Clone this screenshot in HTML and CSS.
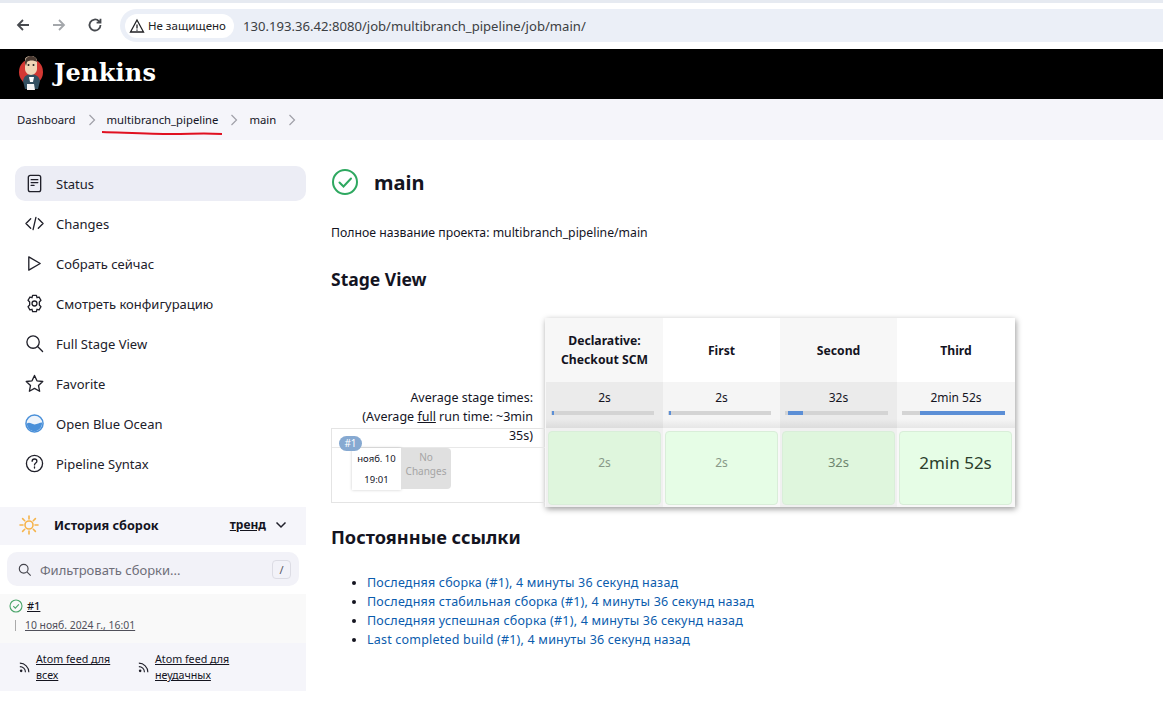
FILE: index.html
```html
<!DOCTYPE html>
<html lang="ru">
<head>
<meta charset="utf-8">
<title>main - Jenkins</title>
<link rel="stylesheet" href="styles.css">
</head>
<body>
<div class="chrome">
  <div class="nav">
    <svg class="nav-icon" viewBox="0 0 16 16"><path d="M14 8H3M8 3 3 8l5 5"/></svg>
    <svg class="nav-icon dim" viewBox="0 0 16 16"><path d="M2 8h11M8 3l5 5-5 5"/></svg>
    <svg class="nav-icon" viewBox="0 0 16 16"><path d="M13.5 8a5.5 5.5 0 1 1-1.6-3.9L13.5 5.7M13.5 1.8v3.9H9.6"/></svg>
  </div>
  <div class="omnibox">
    <div class="chip">
      <svg class="warn" viewBox="0 0 16 16"><path d="M8 2 1.5 14h13zM8 6.5v4M8 11.5v1.2"/></svg>
      <span>Не защищено</span>
    </div>
    <span class="url">130.193.36.42:8080/job/multibranch_pipeline/job/main/</span>
  </div>
</div>
<header class="topbar">
  <svg class="logo" viewBox="0 0 28 36">
    <ellipse cx="14" cy="17" rx="12" ry="13" fill="#d33833"/>
    <path d="M6 26c1-5 4-7 8-7s8 2 9 7l-2 8H8z" fill="#335061"/>
    <path d="M12 22h5l-1 5h-3z" fill="#fff"/>
    <path d="M8 5c0-3 3-4 6-4s6 2 6 5v8c0 3-3 6-6 6s-6-3-6-6z" fill="#f0d6b7"/>
    <path d="M8 8c0-5 3-7 6-7s6 2 6 6c-3-2-8-2-10 0l-1 4z" fill="#4a3a32"/>
    <path d="M10 29h7l1 6h-8z" fill="#f5f5f5"/>
    <circle cx="11.500" cy="10" r="1" fill="#222"/>
    <circle cx="16.500" cy="10" r="1" fill="#222"/>
  </svg>
  <span class="brand">Jenkins</span>
</header>
<nav class="crumbs">
  <a>Dashboard</a>
  <svg class="chev" viewBox="0 0 8 12"><path d="m1.500 1 5 5-5 5"/></svg>
  <a>multibranch_pipeline</a>
  <svg class="chev" viewBox="0 0 8 12"><path d="m1.500 1 5 5-5 5"/></svg>
  <a>main</a>
  <svg class="chev" viewBox="0 0 8 12"><path d="m1.500 1 5 5-5 5"/></svg>
  <svg class="scribble" viewBox="0 0 122 6"><path d="M1 2c30 1 50 2 70 2s30-1 50 0"/></svg>
</nav>
<div class="layout">
  <aside class="side">
    <ul class="menu">
      <li class="item active">
        <svg class="ico" viewBox="0 0 20 20"><rect x="3.500" y="1.500" width="13" height="17" rx="2"/><path d="M6.500 6h7M6.500 9h7M6.500 12h3"/></svg>
        <span>Status</span>
      </li>
      <li class="item">
        <svg class="ico" viewBox="0 0 20 20"><path d="M6 5 1 10l5 5M14 5l5 5-5 5M11.500 3.500l-3 13"/></svg>
        <span>Changes</span>
      </li>
      <li class="item">
        <svg class="ico" viewBox="0 0 20 20"><path d="M4 3v14l12-7z"/></svg>
        <span>Собрать сейчас</span>
      </li>
      <li class="item">
        <svg class="ico" viewBox="0 0 20 20"><path d="M8 1.500h4l.6 2.400 2.200-.7 2 3.400-1.700 1.800v3.200l1.700 1.800-2 3.400-2.200-.7-.6 2.400H8l-.6-2.400-2.200.7-2-3.400 1.700-1.800V8.400L3.200 6.600l2-3.400 2.200.7z"/><circle cx="10" cy="10" r="2.600"/></svg>
        <span>Смотреть конфигурацию</span>
      </li>
      <li class="item">
        <svg class="ico" viewBox="0 0 20 20"><circle cx="8.500" cy="8.500" r="6.500"/><path d="m13.500 13.500 5 5"/></svg>
        <span>Full Stage View</span>
      </li>
      <li class="item">
        <svg class="ico" viewBox="0 0 20 20"><path d="m10 1.500 2.600 5.700 6.100.7-4.500 4.200 1.200 6.100L10 15.200l-5.400 3 1.200-6.100-4.500-4.200 6.100-.7z"/></svg>
        <span>Favorite</span>
      </li>
      <li class="item">
        <svg class="ico ocean" viewBox="0 0 20 20"><circle class="ocean-ring" cx="10" cy="10" r="9"/><path class="ocean-wave" d="M2 10c3-2 5 1 8 1s5-2 8-2c0 5-3 9-8 9s-8-4-8-8z"/></svg>
        <span>Open Blue Ocean</span>
      </li>
      <li class="item">
        <svg class="ico" viewBox="0 0 20 20"><circle cx="10" cy="10" r="8.500"/><path d="M7.500 7.700c0-1.500 1.100-2.400 2.500-2.400s2.500.9 2.500 2.200c0 2-2.500 2-2.500 4M10 13.500v1.300"/></svg>
        <span>Pipeline Syntax</span>
      </li>
    </ul>
    <section class="history">
      <div class="history-head">
        <svg class="sun" viewBox="0 0 20 20"><circle cx="10" cy="10" r="4"/><path d="M10 1v3M10 16v3M1 10h3M16 10h3M3.600 3.600l2.100 2.100M14.300 14.300l2.100 2.100M3.600 16.400l2.100-2.100M14.300 5.700l2.100-2.100"/></svg>
        <strong class="history-title">История сборок</strong>
        <span class="trend">тренд</span>
        <svg class="trend-chev" viewBox="0 0 12 8"><path d="m1.500 1.500 4.500 4.500 4.500-4.500"/></svg>
      </div>
      <div class="filter">
        <svg class="filter-ico" viewBox="0 0 16 16"><circle cx="6.500" cy="6.500" r="5"/><path d="m10.500 10.500 4 4"/></svg>
        <span class="filter-text">Фильтровать сборки...</span>
        <kbd class="slash">/</kbd>
      </div>
      <div class="build">
        <div class="build-top">
          <svg class="build-ok" viewBox="0 0 14 14"><circle cx="7" cy="7" r="6"/><path d="m4.300 7.200 2 2 3.600-3.800"/></svg>
          <a class="build-num">#1</a>
        </div>
        <div class="build-date"><i class="tick"></i><a>10 нояб. 2024 г., 16:01</a></div>
      </div>
      <div class="feeds">
        <div class="feed">
          <svg class="rss" viewBox="0 0 14 14"><circle cx="2.500" cy="11.500" r="1.500"/><path d="M1 6.500a6.500 6.500 0 0 1 6.500 6.500M1 2.500A10.500 10.500 0 0 1 11.500 13"/></svg>
          <a>Atom feed для<br>всех</a>
        </div>
        <div class="feed">
          <svg class="rss" viewBox="0 0 14 14"><circle cx="2.500" cy="11.500" r="1.500"/><path d="M1 6.500a6.500 6.500 0 0 1 6.500 6.500M1 2.500A10.500 10.500 0 0 1 11.500 13"/></svg>
          <a>Atom feed для<br>неудачных</a>
        </div>
      </div>
    </section>
  </aside>
  <main class="content">
    <div class="title-row">
      <svg class="title-ok" viewBox="0 0 28 28"><circle cx="14" cy="14" r="12"/><path d="m8.500 14.500 4 4 7.500-8"/></svg>
      <h1>main</h1>
    </div>
    <p class="fullname">Полное название проекта: multibranch_pipeline/main</p>
    <h2 class="stage-title">Stage View</h2>
    <div class="stage">
      <div class="stage-left">
        <div class="avg">Average stage times:<br>(Average <u>full</u> run time: ~3min 35s)</div>
        <div class="runs">
          <span class="badge">#1</span>
          <div class="run-row">
            <div class="date"><span>нояб. 10</span><span>19:01</span></div>
            <div class="nochg">No Changes</div>
          </div>
        </div>
      </div>
      <div class="grid">
        <div class="th alt">Declarative: Checkout SCM</div>
        <div class="th">First</div>
        <div class="th alt">Second</div>
        <div class="th">Third</div>
        <div class="avgc alt"><span>2s</span><div class="bar"><i class="fill" style="margin-left:1px;width:2px"></i></div></div>
        <div class="avgc"><span>2s</span><div class="bar"><i class="fill" style="margin-left:1px;width:2px"></i></div></div>
        <div class="avgc alt"><span>32s</span><div class="bar"><i class="fill" style="margin-left:3px;width:15px"></i></div></div>
        <div class="avgc"><span>2min 52s</span><div class="bar"><i class="fill" style="margin-left:18px;width:85px"></i></div></div>
        <div class="cellw alt"><div class="cell dark small">2s</div></div>
        <div class="cellw"><div class="cell small">2s</div></div>
        <div class="cellw alt"><div class="cell dark mid">32s</div></div>
        <div class="cellw"><div class="cell big">2min 52s</div></div>
      </div>
    </div>
    <h2 class="links-title">Постоянные ссылки</h2>
    <ul class="links">
      <li><a>Последняя сборка (#1), 4 минуты 36 секунд назад</a></li>
      <li><a>Последняя стабильная сборка (#1), 4 минуты 36 секунд назад</a></li>
      <li><a>Последняя успешная сборка (#1), 4 минуты 36 секунд назад</a></li>
      <li><a>Last completed build (#1), 4 минуты 36 секунд назад</a></li>
    </ul>
  </main>
</div>
</body>
</html>
```
FILE: styles.css
```css
* { box-sizing: border-box; }
html, body { margin: 0; padding: 0; }
body {
  width: 1163px;
  height: 724px;
  overflow: hidden;
  background: #fff;
  color: #14141f;
  font-family: "Noto Sans", "Open Sans", sans-serif;
  font-size: 13px;
}
ul { list-style: none; margin: 0; padding: 0; }
h1, h2, p { margin: 0; }

.chrome {
  height: 49px;
  display: flex;
  align-items: flex-start;
  padding: 9px 0 0 15px;
  background: #fff;
  border-top: 3px solid #e6eaf1;
}
.nav { display: flex; gap: 20px; padding-top: 5px; width: 105px; }
.nav-icon { width: 16px; height: 16px; fill: none; stroke: #474a4f; stroke-width: 1.8; }
.nav-icon.dim { stroke: #a4a7ab; }
.omnibox {
  flex: 1;
  height: 33px;
  margin-top: -3px;
  display: flex;
  align-items: center;
  padding-left: 5px;
  background: #ebeff7;
  border-radius: 17px 0 0 17px;
}
.chip {
  display: flex;
  align-items: center;
  gap: 3px;
  width: 109px;
  height: 24px;
  padding-left: 4px;
  background: #fff;
  border-radius: 12px;
  font-size: 11.500px;
  color: #202124;
}
.warn { width: 16px; height: 16px; fill: none; stroke: #202124; stroke-width: 1.3; }
.url { margin-left: 9px; font-size: 13.100px; color: #3c4043; }

.topbar {
  height: 50px;
  display: flex;
  align-items: center;
  gap: 9px;
  padding: 0 0 3px 17px;
  background: #000;
}
.logo { width: 28px; height: 36px; }
.brand {
  font-family: "DejaVu Serif", "Liberation Serif", serif;
  font-weight: 700;
  font-size: 24px;
  letter-spacing: .2px;
  color: #fff;
}

.crumbs {
  position: relative;
  height: 41px;
  display: flex;
  align-items: center;
  padding-left: 17px;
  background: #f5f5fa;
  font-size: 11.300px;
  color: #14141f;
}
.chev { width: 8px; height: 12px; margin: 0 11px 0 12px; fill: none; stroke: #a0a0a8; stroke-width: 1.2; }
.scribble { position: absolute; left: 101px; top: 31px; width: 122px; height: 6px; fill: none; stroke: #e01020; stroke-width: 2; }

.layout { display: flex; }
.side { width: 306px; flex: none; padding-top: 26px; }
.menu { display: flex; flex-direction: column; gap: 5px; padding-left: 15px; }
.item {
  height: 35px;
  display: flex;
  align-items: center;
  gap: 12px;
  padding-left: 10px;
  border-radius: 10px;
  color: #20202a;
}
.item.active { background: #ecedf5; }
.ico { width: 19px; height: 19px; flex: none; fill: none; stroke: #20202a; stroke-width: 1.4; stroke-linejoin: round; stroke-linecap: round; }
.ocean-ring { stroke: #4a90d9; stroke-width: 1.6; fill: #eef4fb; }
.ocean-wave { stroke: none; fill: #4a90d9; }

.history { margin-top: 26px; }
.history-head {
  height: 38px;
  display: flex;
  align-items: center;
  padding: 0 0 3px 19px;
  background: #f5f5fa;
}
.sun { width: 20px; height: 20px; fill: none; stroke: #f6b44b; stroke-width: 1.6; stroke-linecap: round; }
.history-title { margin-left: 15px; font-size: 12.700px; }
.trend { margin-left: auto; font-weight: 700; font-size: 12px; text-decoration: underline; }
.trend-chev { width: 12px; height: 8px; margin: 0 19px 0 9px; fill: none; stroke: #20202a; stroke-width: 1.5; }
.filter {
  height: 34px;
  margin: 7px 7px 8px;
  display: flex;
  align-items: center;
  padding: 1px 8px 0 11px;
  background: #f2f2f8;
  border-radius: 10px;
}
.filter-ico { width: 14px; height: 14px; fill: none; stroke: #44444c; stroke-width: 1.3; }
.filter-text { margin-left: 8px; color: #6e6e78; }
.slash {
  margin-left: auto;
  width: 19px;
  height: 19px;
  display: flex;
  align-items: center;
  justify-content: center;
  border: 1px solid #dcdce4;
  border-radius: 4px;
  font-family: inherit;
  font-size: 11px;
  color: #55555f;
}
.build { height: 49px; padding: 4px 0 0 9px; background: #f9f9f9; }
.build-top { display: flex; align-items: center; gap: 4px; font-size: 11px; }
.build-ok { width: 14px; height: 14px; fill: none; stroke: #4aa56a; stroke-width: 1.1; }
.build-num { text-decoration: underline; font-weight: 500; }
.build-date { display: flex; align-items: center; gap: 9px; margin-top: 5px; padding-left: 6px; font-size: 10.400px; color: #50505a; }
.build-date a { text-decoration: underline; }
.tick { width: 1px; height: 11px; background: #aaa; }
.feeds { height: 48px; display: flex; padding: 8px 0 0 19px; gap: 26px; background: #f5f5fa; }
.feed { display: flex; align-items: center; gap: 5px; width: 93px; font-size: 10.700px; line-height: 16px; align-self: flex-start; white-space: nowrap; }
.feed a { text-decoration: underline; }
.rss { width: 12px; height: 12px; flex: none; fill: none; stroke: #20202a; stroke-width: 1.3; }
.rss circle { fill: #20202a; stroke: none; }

.content { flex: 1; padding: 27px 0 0 25px; }
.title-row { display: flex; align-items: center; gap: 15px; height: 30px; }
.title-ok { width: 28px; height: 28px; fill: none; stroke: #2ea860; stroke-width: 2; stroke-linecap: round; }
h1 { font-size: 20px; font-weight: 700; }
.fullname { margin-top: 27px; font-size: 12.250px; line-height: 17px; }
.stage-title { margin-top: 26px; font-size: 17.500px; font-weight: 700; }

.stage { display: flex; margin-top: 27px; }
.stage-left { width: 214px; flex: none; padding-top: 70px; }
.avg { position: relative; z-index: 1; padding: 0 12px 0 20px; text-align: right; font-size: 12.500px; line-height: 19px; }
.runs {
  position: relative;
  height: 75px;
  margin-top: -17px;
  padding-top: 18px;
  border: 1px solid #e4e4e4;
  border-right: 0;
}
.badge {
  position: absolute;
  left: 7px;
  top: 7px;
  width: 23px;
  height: 15px;
  border-radius: 8px;
  background: #86a9d1;
  color: #fff;
  font-size: 10px;
  line-height: 15px;
  text-align: center;
}
.run-row { display: flex; padding-left: 20px; border-top: 1px solid #e8e8e8; }
.date {
  width: 49px;
  height: 42px;
  display: flex;
  flex-direction: column;
  justify-content: space-around;
  align-items: center;
  background: #fff;
  box-shadow: 0 0 3px rgba(0,0,0,.2);
  font-size: 9.500px;
}
.nochg {
  width: 50px;
  height: 41px;
  padding-top: 2px;
  text-align: center;
  background: #e0e0e0;
  border-radius: 0 4px 4px 0;
  color: #a5a5a5;
  font-size: 10px;
  line-height: 14px;
}

.grid {
  width: 470px;
  padding-left: 1px;
  display: grid;
  grid-template-columns: 117px 117px 117px 118px;
  grid-template-rows: 64px 46px 79px;
  background: #f7f7f7;
  box-shadow: 1px 2px 6px rgba(0,0,0,.4);
}
.th {
  display: flex;
  align-items: center;
  justify-content: center;
  padding: 0 10px;
  text-align: center;
  font-size: 12.200px;
  font-weight: 700;
  line-height: 19px;
  background: #fff;
}
.th.alt { background: #f7f7f7; }
.avgc {
  display: flex;
  flex-direction: column;
  align-items: center;
  gap: 5px;
  padding-top: 7px;
  background: linear-gradient(#f5f5f5 80%, #e6e6e6);
  font-size: 12px;
}
.avgc.alt { background: linear-gradient(#ebebeb 80%, #dcdcdc); }
.bar { width: 103px; height: 4px; align-self: flex-start; margin-left: 5px; display: flex; background: #d4d4d4; }
.fill { height: 4px; background: #5c8fd6; }
.cellw { padding: 3px 2px 2px; background: #f8f8f8; }
.cellw.alt { background: #f0f0f0; }
.cell {
  width: 113px;
  height: 100%;
  display: flex;
  align-items: center;
  justify-content: center;
  padding-bottom: 12px;
  background: #e6fde6;
  border: 1px solid #d9eed9;
  border-radius: 4px;
  color: #889988;
  font-size: 12px;
}
.cell.dark { background: #dff6dd; }
.cell.mid { font-size: 13px; color: #6f866f; }
.cell.big { font-size: 17px; color: #2b3d2b; }

.links-title { margin-top: 18px; font-size: 18.200px; font-weight: 700; }
.links { margin-top: 24px; padding-left: 36px; list-style: disc; font-size: 12.500px; line-height: 19px; color: #0b5cad; letter-spacing: .2px; }
.links li::marker { color: #14141f; }
```
